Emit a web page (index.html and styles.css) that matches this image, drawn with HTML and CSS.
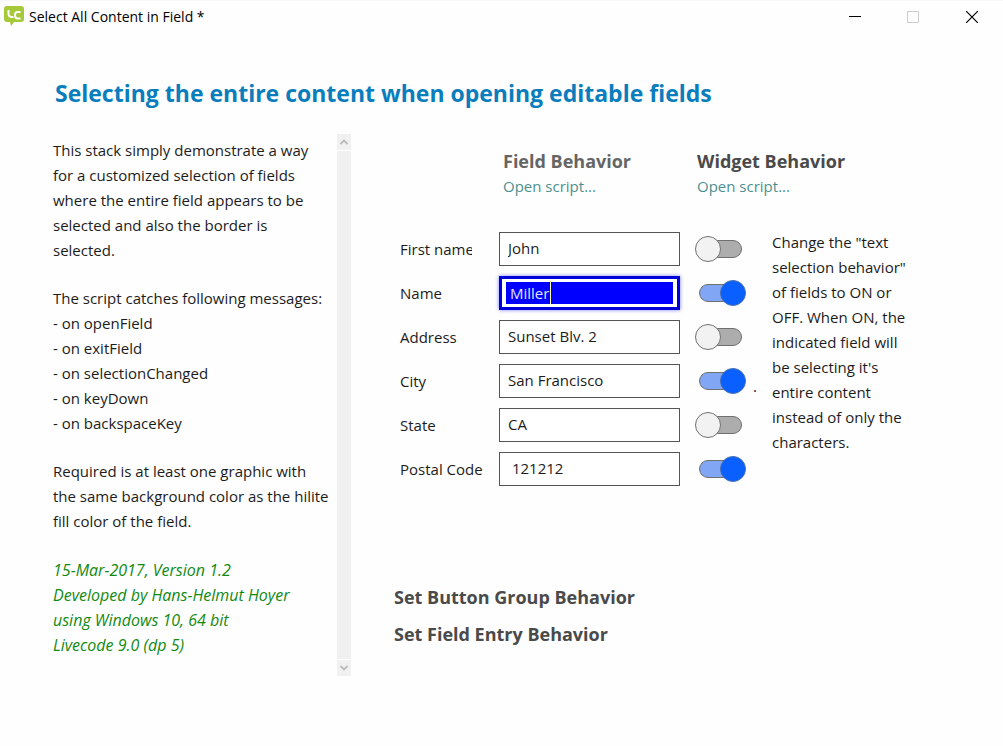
FILE: index.html
```
<!DOCTYPE html>
<html lang="en">
<head>
    <meta charset="utf-8">
    <title>Select All Content in Field *</title>
    <link rel="stylesheet" href="styles.css">
</head>
<body>
    <header class="titlebar">
        <svg class="logo" width="20" height="21" viewBox="0 0 20 21">
            <path d="M3 0H17Q20 0 20 3V13Q20 16 17 16H10L7 20L6 16H3Q0 16 0 13V3Q0 0 3 0Z" fill="#a6c93a"/>
            <path d="M4.500 4V7.500Q4.500 11 8 11H9.500M16.500 6H13.500Q11 6 11 9Q11 12.500 13.500 12.500H16.500" fill="none" stroke="#fff" stroke-width="2"/>
        </svg>
        <span class="caption">Select All Content in Field *</span>
        <button class="winbtn" aria-label="Minimize">
            <svg width="12" height="12" viewBox="0 0 12 12"><path d="M0 5.500H12" stroke="#000"/></svg>
        </button>
        <button class="winbtn" aria-label="Maximize" disabled>
            <svg width="12" height="12" viewBox="0 0 12 12"><path d="M.5 .5H11.500V11.500H.5Z" fill="none" stroke="#ccc"/></svg>
        </button>
        <button class="winbtn" aria-label="Close">
            <svg width="12" height="12" viewBox="0 0 12 12"><path d="M0 0L12 12M12 0L0 12" stroke="#000" stroke-width="1.200"/></svg>
        </button>
    </header>
    <main>
        <h1>Selecting the entire content when opening editable fields</h1>
        <div class="content">
            <section class="info">
                <div class="infotext">
                    <p>This stack simply demonstrate a way<br>for a customized selection of fields<br>where the entire field appears to be<br>selected and also the border is<br>selected.</p>
                    <p>The script catches following messages:<br>- on openField<br>- on exitField<br>- on selectionChanged<br>- on keyDown<br>- on backspaceKey</p>
                    <p>Required is at least one graphic with<br>the same background color as the hilite<br>fill color of the field.</p>
                    <p class="credits">15-Mar-2017, Version 1.2<br>Developed by Hans-Helmut Hoyer<br>using Windows 10, 64 bit<br>Livecode 9.0 (dp 5)</p>
                </div>
                <div class="scrollbar">
                    <button aria-label="Scroll up"><svg width="10" height="8" viewBox="0 0 10 8"><path d="M1.500 6L5 2.500L8.500 6" fill="none" stroke="#bbb" stroke-width="1.800"/></svg></button>
                    <div class="track"></div>
                    <button aria-label="Scroll down"><svg width="10" height="8" viewBox="0 0 10 8"><path d="M1.500 2L5 5.500L8.500 2" fill="none" stroke="#bbb" stroke-width="1.800"/></svg></button>
                </div>
            </section>
            <section class="demo">
                <div class="behaviors">
                    <div>
                        <h2 class="light">Field Behavior</h2>
                        <a href="#field">Open script...</a>
                    </div>
                    <div>
                        <h2>Widget Behavior</h2>
                        <a href="#widget">Open script...</a>
                    </div>
                </div>
                <div class="entry">
                    <form class="fields">
                        <div class="row">
                            <label class="clip" for="first">First name</label>
                            <input type="text" id="first" value="John">
                            <input type="checkbox" class="switch" aria-label="Select all in First name">
                        </div>
                        <div class="row">
                            <label for="name">Name</label>
                            <div class="active">
                                <input type="text" id="name" value="Miller">
                                <span class="caret"></span>
                            </div>
                            <input type="checkbox" class="switch" aria-label="Select all in Name" checked>
                        </div>
                        <div class="row">
                            <label for="address">Address</label>
                            <input type="text" id="address" value="Sunset Blv. 2">
                            <input type="checkbox" class="switch" aria-label="Select all in Address">
                        </div>
                        <div class="row">
                            <label for="city">City</label>
                            <input type="text" id="city" value="San Francisco">
                            <input type="checkbox" class="switch" aria-label="Select all in City" checked>
                            <span class="dot">.</span>
                        </div>
                        <div class="row">
                            <label for="state">State</label>
                            <input type="text" id="state" value="CA">
                            <input type="checkbox" class="switch" aria-label="Select all in State">
                        </div>
                        <div class="row">
                            <label for="postal">Postal Code</label>
                            <input type="text" id="postal" value=" 121212">
                            <input type="checkbox" class="switch" aria-label="Select all in Postal Code" checked>
                        </div>
                    </form>
                    <p class="hint">Change the "text<br>selection behavior"<br>of fields to ON or<br>OFF. When ON, the<br>indicated field will<br>be selecting it's<br>entire content<br>instead of only the<br>characters.</p>
                </div>
                <div class="actions">
                    <button>Set Button Group Behavior</button>
                    <button>Set Field Entry Behavior</button>
                </div>
            </section>
        </div>
    </main>
</body>
</html>
```
FILE: styles.css
```
*, *::before, *::after {
    box-sizing: border-box;
}
body {
    margin: 0;
    background: #fefefe;
    color: #1c1c1c;
    font-family: "Segoe UI", "Open Sans", "Noto Sans", sans-serif;
    font-size: 15px;
    line-height: 25px;
}
h1, h2, p {
    margin: 0;
}
button {
    border: none;
    background: none;
    padding: 0;
    font-family: inherit;
}
.titlebar {
    display: flex;
    align-items: center;
    height: 32px;
    padding: 0 1px 0 4px;
    border-top: 1px solid #f8f8f8;
}
.caption {
    flex: 1;
    margin-left: 5px;
    font-size: 14px;
    color: #000;
}
.winbtn {
    display: flex;
    align-items: center;
    justify-content: center;
    width: 58px;
    height: 30px;
}
.winbtn:last-child {
    width: 60px;
}
main {
    padding: 45px 50px 40px 53px;
}
h1 {
    padding-left: 2px;
    font-size: 23px;
    line-height: 32px;
    color: #0a7dbd;
}
.content {
    display: flex;
    gap: 43px;
    margin-top: 25px;
}
.info {
    display: flex;
    width: 298px;
}
.infotext {
    flex: 1;
    padding-top: 4px;
    white-space: nowrap;
}
.infotext p {
    margin-bottom: 23px;
}
.infotext .credits {
    margin: 24px 0 18px;
    color: #128a12;
    font-size: 16px;
    font-style: italic;
}
.scrollbar {
    display: flex;
    flex-direction: column;
    gap: 1px;
    width: 14px;
}
.scrollbar button {
    display: flex;
    align-items: center;
    justify-content: center;
    height: 16px;
    background: #f1f1f1;
}
.track {
    flex: 1;
    background: #f0f0f0;
}
.demo {
    flex: 1;
    padding-top: 14px;
}
.behaviors {
    display: flex;
    padding-left: 109px;
}
.behaviors div {
    width: 194px;
}
h2 {
    font-size: 18px;
    line-height: 26px;
    color: #4a4a4a;
}
.light {
    color: #666;
}
.behaviors a {
    display: block;
    color: #4c9090;
    text-decoration: none;
}
.entry {
    display: flex;
    padding: 31px 0 0 6px;
}
.fields {
    width: 372px;
    padding-top: 2px;
}
.row {
    display: flex;
    align-items: center;
    height: 34px;
    margin-bottom: 10px;
}
.row label {
    width: 99px;
    color: #1c1c1c;
}
.row .clip {
    width: 72px;
    margin-right: 27px;
    overflow: hidden;
    white-space: nowrap;
}
.row input[type=text] {
    width: 181px;
    height: 34px;
    padding: 0 8px 2px;
    border: 1px solid #555;
    background: #fff;
    color: #1c1c1c;
    font-family: inherit;
    font-size: 15px;
}
.active {
    position: relative;
}
.row .active input {
    display: block;
    padding: 3px 4px;
    border: 3px solid #0000d8;
    background: #0000ff content-box;
    box-shadow: 0 0 4px #8080ff;
    color: #e4e4ff;
    text-indent: 4px;
}
.caret {
    position: absolute;
    top: 5px;
    left: 51px;
    width: 1px;
    height: 24px;
    background: #ffffa0;
}
.switch {
    appearance: none;
    position: relative;
    width: 51px;
    height: 26px;
    margin: 0 0 0 15px;
}
.switch::before {
    content: "";
    position: absolute;
    top: 4px;
    left: 1px;
    width: 46px;
    height: 18px;
    border: 1px solid #707070;
    border-radius: 9px;
    background: #adadad;
}
.switch::after {
    content: "";
    position: absolute;
    top: 0;
    left: 0;
    width: 26px;
    height: 26px;
    border: 1px solid #707070;
    border-radius: 50%;
    background: #f2f2f2;
}
.switch:checked::before {
    left: 4px;
    width: 45px;
    background: #80a6f4;
}
.switch:checked::after {
    left: 25px;
    border-color: #4b6faa;
    background: #0a60ff;
}
.dot {
    margin: 10px 0 0 7px;
}
.hint {
    white-space: nowrap;
}
.actions {
    display: flex;
    flex-direction: column;
    align-items: flex-start;
    gap: 11px;
    padding-top: 88px;
}
.actions button {
    font-size: 18px;
    font-weight: bold;
    line-height: 26px;
    color: #4a4a4a;
}
```
